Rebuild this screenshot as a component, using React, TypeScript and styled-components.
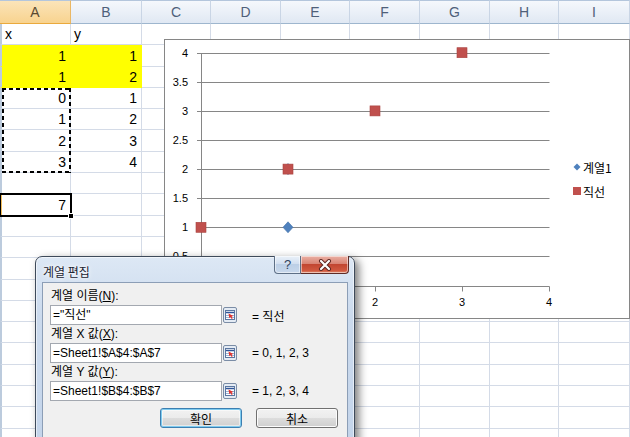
import styled, { createGlobalStyle } from 'styled-components';

const GlobalStyle = createGlobalStyle`
  *, *::before, *::after { box-sizing: border-box; }
  html, body { margin: 0; padding: 0; background: #fff; }
  body {
    overflow: hidden;
    font-family: "Liberation Sans", "Noto Sans CJK KR", sans-serif;
  }
`;

const colWidths = [71, 71, 69, 70, 69, 70, 70, 69, 71];
const colNames = ['A', 'B', 'C', 'D', 'E', 'F', 'G', 'H', 'I'];
const ROWS = 20;
const ACTIVE_ROW = 9;

type CellData = { v: string; left?: boolean; fill?: boolean };

const data: Record<number, CellData[]> = {
  1: [{ v: 'x', left: true }, { v: 'y', left: true }],
  2: [{ v: '1', fill: true }, { v: '1', fill: true }],
  3: [{ v: '1', fill: true }, { v: '2', fill: true }],
  4: [{ v: '0' }, { v: '1' }],
  5: [{ v: '1' }, { v: '2' }],
  6: [{ v: '2' }, { v: '3' }],
  7: [{ v: '3' }, { v: '4' }],
  9: [{ v: '7' }],
};

const Sheet = styled.div`
  position: relative;
  width: 630px;
  height: 437px;
  overflow: hidden;
  background: #fff;
`;

const Grid = styled.div`
  display: grid;
  grid-template-columns: ${colWidths.map(w => w + 'px').join(' ')};
  grid-template-rows: 24px repeat(${ROWS}, 21.3px);
`;

const ColHeader = styled.div<{ $c: number; $sel?: boolean }>`
  grid-row: 1;
  grid-column: ${p => p.$c};
  display: flex;
  align-items: center;
  justify-content: center;
  border-top: 1px solid #b4c6dc;
  border-right: 1px solid ${p => (p.$sel ? '#eab764' : '#c9d5e5')};
  border-bottom: 1px solid ${p => (p.$sel ? '#eaa93c' : '#9eb6ce')};
  background: ${p =>
    p.$sel ? 'linear-gradient(#fbe4b9, #f8d38f)' : 'linear-gradient(#f5f8fc, #e0e8f3)'};
  color: ${p => (p.$sel ? '#5a4a30' : '#4f6079')};
  font-size: 14px;
`;

const Cell = styled.div<{ $r: number; $c: number; $left?: boolean; $fill?: boolean; $active?: boolean }>`
  position: relative;
  grid-row: ${p => p.$r + 1};
  grid-column: ${p => p.$c};
  display: flex;
  align-items: flex-end;
  justify-content: ${p => (p.$left ? 'flex-start' : 'flex-end')};
  padding: 0 4px 1px 3px;
  border-right: 1px solid ${p => (p.$fill ? '#ffff00' : '#d4dbe7')};
  border-bottom: 1px solid ${p => (p.$fill ? '#ffff00' : '#d4dbe7')};
  border-left: ${p => (p.$c === 1 ? `2px solid ${p.$active ? '#f2bd5a' : '#bccbdd'}` : 'none')};
  background: ${p => (p.$fill ? '#ffff00' : '#fff')};
  font-size: 14px;
  line-height: 17px;
  color: #000;
  ${p =>
    p.$active &&
    `
    z-index: 2;
    outline: 2px solid #000;
    outline-offset: -1px;
    &::after {
      content: '';
      position: absolute;
      right: -4px;
      bottom: -4px;
      width: 6px;
      height: 6px;
      background: #000;
      border: 1px solid #fff;
    }
  `}
`;

const Marquee = styled.div`
  grid-column: 1;
  grid-row: 5 / 9;
  margin-left: 2px;
  z-index: 1;
  pointer-events: none;
  background:
    repeating-linear-gradient(90deg, #000 0 4px, transparent 4px 7px) top left / 100% 2px no-repeat,
    repeating-linear-gradient(90deg, #000 0 4px, transparent 4px 7px) bottom left / 100% 2px no-repeat,
    repeating-linear-gradient(180deg, #000 0 4px, transparent 4px 7px) top left / 2px 100% no-repeat,
    repeating-linear-gradient(180deg, #000 0 4px, transparent 4px 7px) top right / 2px 100% no-repeat;
`;

/* ---------- chart ---------- */

const ChartBox = styled.div`
  position: absolute;
  left: 164px;
  top: 39px;
  width: 466px;
  height: 280px;
  border: 1px solid #868686;
  background: #fff;
  display: flex;
  z-index: 3;
`;

const Legend = styled.div`
  display: flex;
  flex-direction: column;
  justify-content: center;
`;

const LegendItem = styled.div`
  display: flex;
  align-items: center;
  height: 24px;
  gap: 2px;
  font-family: "Noto Sans CJK KR", sans-serif;
  font-size: 12px;
  color: #000;
`;

const PX = (v: number) => 36 + 87 * v;
const PY = (v: number) => 245.5 - 58.2 * v;
const snap = (n: number) => Math.round(n) + 0.5;

const red = [[0, 1], [1, 2], [2, 3], [3, 4]];
const blue = [[1, 1], [1, 2]];

function Chart() {
  const yTicks = [0, 0.5, 1, 1.5, 2, 2.5, 3, 3.5, 4];
  const xTicks = [0, 1, 2, 3, 4];
  const axisY = snap(PY(0));
  return (
    <ChartBox>
      <svg width="408" height="278" viewBox="0 0 408 278" style={{ display: 'block' }}>
        {yTicks.slice(1).map(v => (
          <line key={v} x1={32} x2={384.5} y1={snap(PY(v))} y2={snap(PY(v))} stroke="#868686" />
        ))}
        <line x1={36.5} x2={36.5} y1={snap(PY(4))} y2={axisY} stroke="#868686" />
        <line x1={32} x2={384.5} y1={axisY} y2={axisY} stroke="#868686" />
        {xTicks.map(v => (
          <line key={v} x1={snap(PX(v))} x2={snap(PX(v))} y1={axisY} y2={axisY + 5} stroke="#868686" />
        ))}
        <g fontFamily='"Liberation Sans", sans-serif' fontSize="11" fill="#000">
          {yTicks.map(v => (
            <text key={v} x={23} y={PY(v) + 4} textAnchor="end">{String(v)}</text>
          ))}
          {xTicks.map(v => (
            <text key={v} x={PX(v)} y={266} textAnchor="middle">{String(v)}</text>
          ))}
        </g>
        {blue.map(([x, y]) => (
          <path
            key={`b${x}-${y}`}
            d={`M${PX(x)} ${PY(y) - 5.5} l5 5.5 l-5 5.5 l-5 -5.5 z`}
            fill="#4f81bd"
            stroke="#3f6fa8"
            strokeWidth="0.6"
          />
        ))}
        {red.map(([x, y]) => (
          <rect
            key={`r${x}-${y}`}
            x={PX(x) - 5}
            y={PY(y) - 5}
            width="10"
            height="10"
            fill="#c0504d"
            stroke="#a8423f"
            strokeWidth="0.6"
          />
        ))}
      </svg>
      <Legend>
        <LegendItem>
          <svg width="8" height="8" viewBox="0 0 8 8">
            <path d="M4 0.5 L7.5 4 L4 7.5 L0.5 4 Z" fill="#4f81bd" />
          </svg>
          계열1
        </LegendItem>
        <LegendItem>
          <svg width="8" height="8" viewBox="0 0 8 8">
            <rect x="0" y="0" width="8" height="8" fill="#c0504d" />
          </svg>
          직선
        </LegendItem>
      </Legend>
    </ChartBox>
  );
}

/* ---------- dialog ---------- */

const Dialog = styled.div`
  position: absolute;
  left: 35px;
  top: 256px;
  width: 320px;
  height: 200px;
  z-index: 4;
  border: 1px solid #3e4a5a;
  border-radius: 7px 7px 0 0;
  padding: 0 6px;
  background: linear-gradient(#dde8f5, #cbdaed 30%, #c3d4ea);
  box-shadow: 4px 3px 9px rgba(0, 0, 0, 0.5), inset 0 0 0 1px rgba(255, 255, 255, 0.55);
`;

const TitleBar = styled.div`
  height: 25px;
  display: flex;
  align-items: flex-start;
`;

const Title = styled.div`
  padding: 7px 0 0 1px;
  font-family: "Noto Sans CJK KR", sans-serif;
  font-size: 12px;
  line-height: 16px;
  color: #1b2330;
  text-shadow: 0 0 6px #fff, 0 0 3px #fff;
`;

const CaptionButtons = styled.div`
  display: flex;
  margin: -1px -1px 0 auto;
`;

const CaptionButton = styled.div<{ $close?: boolean }>`
  display: flex;
  align-items: center;
  justify-content: center;
  width: ${p => (p.$close ? 48 : 27)}px;
  height: 18px;
  border: 1px solid ${p => (p.$close ? '#5e2b26' : '#5d6f86')};
  border-top: none;
  border-left: ${p => (p.$close ? 'none' : undefined)};
  border-radius: ${p => (p.$close ? '0 0 4px 0' : '0 0 0 4px')};
  background: ${p =>
    p.$close
      ? 'linear-gradient(#eab0a4, #d98474 45%, #c24631 50%, #d0583f 85%, #e08a6e)'
      : 'linear-gradient(#eaf1f9, #d2dff0 45%, #bccfe6 50%, #c8d8ec)'};
  box-shadow: inset 0 0 0 1px rgba(255, 255, 255, 0.5);
  font-family: "Liberation Sans", sans-serif;
  font-size: 13px;
  color: #32445c;
`;

const Client = styled.div`
  height: 200px;
  border: 1px solid #8c9eb6;
  background: #f0f0f0;
  padding: 5px 9px 0 7px;
`;

const Label = styled.div`
  height: 17px;
  line-height: 17px;
  padding-left: 1px;
  font-size: 12px;
  color: #000;
`;

const Key = styled.span`
  text-decoration: underline;
`;

const FieldRow = styled.div`
  display: flex;
  align-items: center;
  height: 20px;
  margin-bottom: 1px;
`;

const Input = styled.div`
  width: 172px;
  height: 20px;
  border: 1px solid #a3a8b0;
  background: #fff;
  padding-left: 2px;
  font-size: 12px;
  line-height: 18px;
  color: #000;
  white-space: nowrap;
`;

const RefButton = styled.div`
  margin-left: 1px;
  display: flex;
`;

const Value = styled.div`
  margin-left: 15px;
  font-size: 12px;
  color: #000;
  white-space: nowrap;
`;

const ButtonRow = styled.div`
  display: flex;
  justify-content: flex-end;
  gap: 14px;
  margin-top: 7px;
`;

const PushButton = styled.div<{ $default?: boolean }>`
  width: 82px;
  height: 20px;
  display: flex;
  align-items: center;
  justify-content: center;
  border: 1px solid ${p => (p.$default ? '#3c7fb1' : '#707070')};
  border-radius: 3px;
  background: linear-gradient(#f2f2f2, #ebebeb 50%, #dddddd 50%, #cfcfcf);
  box-shadow: ${p =>
    p.$default ? 'inset 0 0 0 1px #7fcbef, inset 0 0 0 2px rgba(255,255,255,0.5)' : 'inset 0 0 0 1px #fcfcfc'};
  font-family: "Noto Sans CJK KR", sans-serif;
  font-size: 12px;
  color: #000;
`;

function RefIcon() {
  return (
    <svg width="14" height="16" viewBox="0 0 14 16">
      <rect x="0.5" y="0.5" width="13" height="15" rx="1.5" fill="#e4ebf4" stroke="#7b8da6" />
      <rect x="2.5" y="3.5" width="9" height="9" fill="#fff" stroke="#5a76a0" />
      <line x1="3" y1="5.5" x2="11" y2="5.5" stroke="#2f559a" strokeWidth="1.5" />
      <line x1="3" y1="8.5" x2="11" y2="8.5" stroke="#9db3d3" />
      <line x1="3" y1="10.5" x2="11" y2="10.5" stroke="#9db3d3" />
      <path d="M5.5 6.5 L10.5 9 L8.6 9.6 L9.6 11.6 L8.6 12 L7.6 10.1 L6.4 11.2 Z" fill="#e0302c" />
    </svg>
  );
}

function CloseGlyph() {
  return (
    <svg width="14" height="12" viewBox="0 0 14 12">
      <path d="M3 2 L11 10 M11 2 L3 10" stroke="#5a2420" strokeWidth="4" strokeLinecap="round" />
      <path d="M3 2 L11 10 M11 2 L3 10" stroke="#fff" strokeWidth="2.2" strokeLinecap="round" />
    </svg>
  );
}

function SeriesDialog() {
  return (
    <Dialog>
      <TitleBar>
        <Title>계열 편집</Title>
        <CaptionButtons>
          <CaptionButton>?</CaptionButton>
          <CaptionButton $close>
            <CloseGlyph />
          </CaptionButton>
        </CaptionButtons>
      </TitleBar>
      <Client>
        <Label>계열 이름(<Key>N</Key>):</Label>
        <FieldRow>
          <Input>="직선"</Input>
          <RefButton><RefIcon /></RefButton>
          <Value>= 직선</Value>
        </FieldRow>
        <Label>계열 X 값(<Key>X</Key>):</Label>
        <FieldRow>
          <Input>=Sheet1!$A$4:$A$7</Input>
          <RefButton><RefIcon /></RefButton>
          <Value>= 0, 1, 2, 3</Value>
        </FieldRow>
        <Label>계열 Y 값(<Key>Y</Key>):</Label>
        <FieldRow>
          <Input>=Sheet1!$B$4:$B$7</Input>
          <RefButton><RefIcon /></RefButton>
          <Value>= 1, 2, 3, 4</Value>
        </FieldRow>
        <ButtonRow>
          <PushButton $default>확인</PushButton>
          <PushButton>취소</PushButton>
        </ButtonRow>
      </Client>
    </Dialog>
  );
}

export default function App() {
  const rows = Array.from({ length: ROWS }, (_, i) => i + 1);
  return (
    <Sheet>
      <GlobalStyle />
      <Grid>
        {colNames.map((n, i) => (
          <ColHeader key={n} $c={i + 1} $sel={i === 0}>
            {n}
          </ColHeader>
        ))}
        {rows.map(r =>
          colNames.map((n, ci) => {
            const d = data[r]?.[ci];
            return (
              <Cell
                key={`${n}${r}`}
                $r={r}
                $c={ci + 1}
                $left={d?.left}
                $fill={d?.fill}
                $active={r === ACTIVE_ROW && ci === 0}
              >
                {d?.v}
              </Cell>
            );
          })
        )}
        <Marquee />
      </Grid>
      <Chart />
      <SeriesDialog />
    </Sheet>
  );
}
